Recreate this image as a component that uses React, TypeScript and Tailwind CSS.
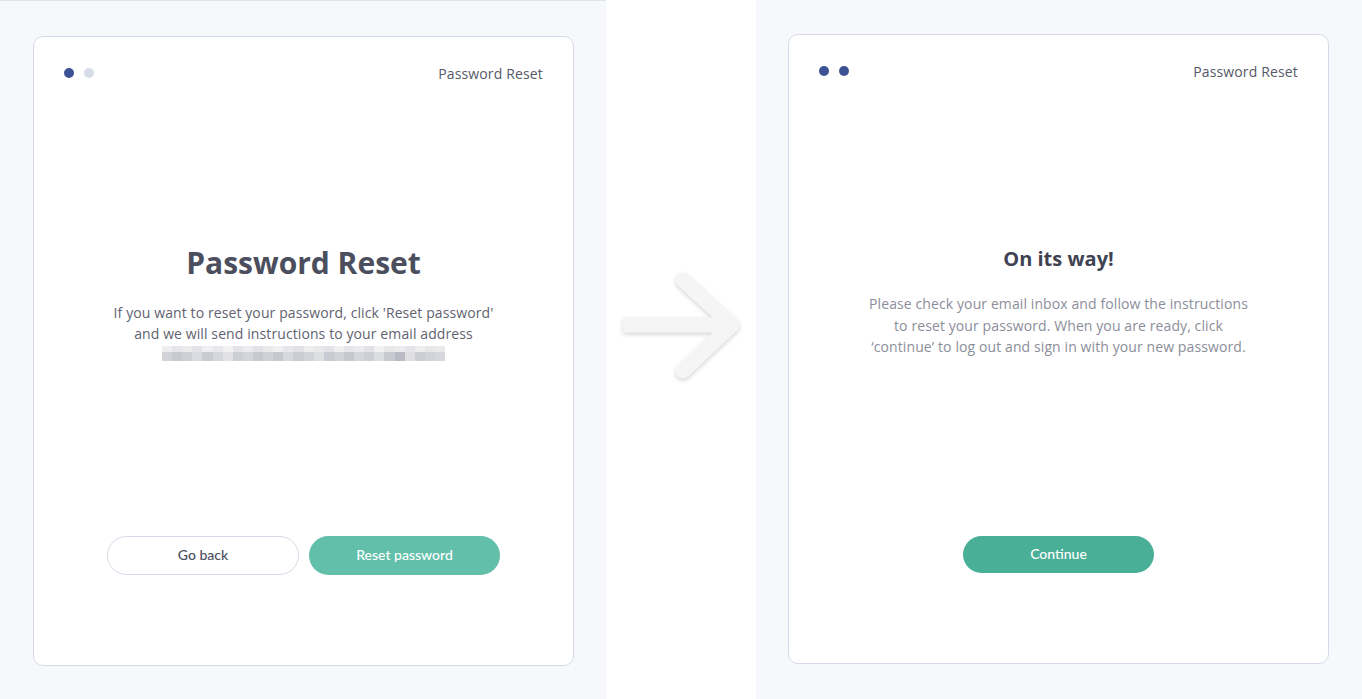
const topShades = [
  "#eeeef1", "#e6e6ea", "#ebebee", "#e4e4e8", "#efeff2", "#e8e8ec", "#f2f2f4", "#e5e5e9",
  "#ececef", "#e3e3e7", "#eaeaed", "#f0f0f2", "#e7e7eb", "#e2e2e6", "#ededf0", "#e9e9ec",
  "#e4e4e8", "#efeff1", "#e6e6ea", "#ebebee", "#e3e3e7", "#f1f1f3", "#e8e8eb", "#ececef",
  "#e5e5e9", "#eeeef1", "#e7e7ea", "#eaeaed",
]
const bottomShades = [
  "#d2d3d9", "#c9cad1", "#cfd0d6", "#dadbe0", "#cbccd3", "#d6d7dc", "#e2e2e6", "#cdced4",
  "#d4d5da", "#c8c9d0", "#d0d1d7", "#c6c7cf", "#d8d9de", "#cccdd4", "#d3d4d9", "#dedfe3",
  "#cacbd2", "#d1d2d8", "#c7c8cf", "#d5d6db", "#cecfd5", "#dcdde1", "#c9cad1", "#babbc4",
  "#e0e0e4", "#cdced4", "#d2d3d9", "#d7d8dd",
]

function Dots({ second }: { second: string }) {
  return (
    <div className="flex items-center gap-[10px]">
      <span className="w-[10px] h-[10px] rounded-full bg-[#3c5295]" />
      <span className={`w-[10px] h-[10px] rounded-full ${second}`} />
    </div>
  )
}

function CardHeader({ second }: { second: string }) {
  return (
    <div className="flex items-center justify-between h-[20px] pl-[30px] pr-[30px]">
      <Dots second={second} />
      <span className="text-[14px] tracking-[0.15px] text-[#555968]">Password Reset</span>
    </div>
  )
}

function BlurredEmail() {
  return (
    <div className="mt-[2px] mx-auto w-[283px] flex flex-col blur-[0.6px]">
      <div className="flex h-[6px]">
        {topShades.map((c, i) => (
          <div key={i} className="flex-1" style={{ backgroundColor: c }} />
        ))}
      </div>
      <div className="flex h-[9px]">
        {bottomShades.map((c, i) => (
          <div key={i} className="flex-1" style={{ backgroundColor: c }} />
        ))}
      </div>
    </div>
  )
}

function Arrow() {
  return (
    <svg
      width="135"
      height="125"
      viewBox="0 0 135 125"
      fill="none"
      className="ml-[9px] mt-[265px] drop-shadow-[0_2px_2px_rgba(0,0,0,0.16)]"
    >
      <path d="M8 60 H110" stroke="#f5f5f6" strokeWidth="15" />
      <path
        d="M68 15 L117 60 L68 106"
        stroke="#f5f5f6"
        strokeWidth="15"
        strokeLinecap="round"
        strokeLinejoin="round"
      />
    </svg>
  )
}

export default function App() {
  return (
    <div className="w-full h-[699px] flex font-['Open_Sans',sans-serif] overflow-hidden">
      {/* Step 1 */}
      <div className="w-[606px] shrink-0 bg-[#f7f8fc] border-t border-[#dfe3ea] pl-[33px] pt-[35px]">
        <div className="w-[541px] h-[630px] bg-white border border-[#d5dbe6] rounded-[10px] pt-[26px] pb-[90px] flex flex-col">
          <CardHeader second="bg-[#d6dde8]" />
          <h1 className="mt-[160px] text-center text-[30px] leading-[40px] font-bold text-[#4b4e5d]">
            Password Reset
          </h1>
          <p className="mt-[19px] text-center text-[14px] leading-[21px] tracking-[0.1px] text-[#5f6270]">
            If you want to reset your password, click 'Reset password'
            <br />
            and we will send instructions to your email address
          </p>
          <BlurredEmail />
          <div className="mt-auto flex justify-center gap-[10px] font-['Lato',sans-serif] text-[14px] font-medium">
            <button className="w-[192px] h-[39px] pb-[3px] rounded-full border border-[#d5dbe6] text-[#4b4e5d]">
              Go back
            </button>
            <button className="w-[191px] h-[39px] pb-[3px] rounded-full bg-[#62bfaa] text-white">
              Reset password
            </button>
          </div>
        </div>
      </div>

      {/* Transition */}
      <div className="w-[150px] shrink-0 bg-white">
        <Arrow />
      </div>

      {/* Step 2 */}
      <div className="flex-1 bg-[#f7f8fc] pl-[32px] pt-[34px]">
        <div className="w-[541px] h-[630px] bg-white border border-[#d5dbe6] rounded-[10px] pt-[26px] pb-[90px] flex flex-col">
          <CardHeader second="bg-[#3c5295]" />
          <h2 className="mt-[164px] text-center text-[20px] leading-[28px] font-bold text-[#3f4252]">
            On its way!
          </h2>
          <p className="mt-[20px] text-center text-[14px] leading-[21.5px] tracking-[0.1px] text-[#8b8e9a]">
            Please check your email inbox and follow the instructions
            <br />
            to reset your password. When you are ready, click
            <br />
            ‘continue’ to log out and sign in with your new password.
          </p>
          <div className="mt-auto flex justify-center font-['Lato',sans-serif] text-[14px] font-medium">
            <button className="w-[191px] h-[37px] pb-[3px] rounded-full bg-[#4aaf97] text-white">
              Continue
            </button>
          </div>
        </div>
      </div>
    </div>
  )
}
